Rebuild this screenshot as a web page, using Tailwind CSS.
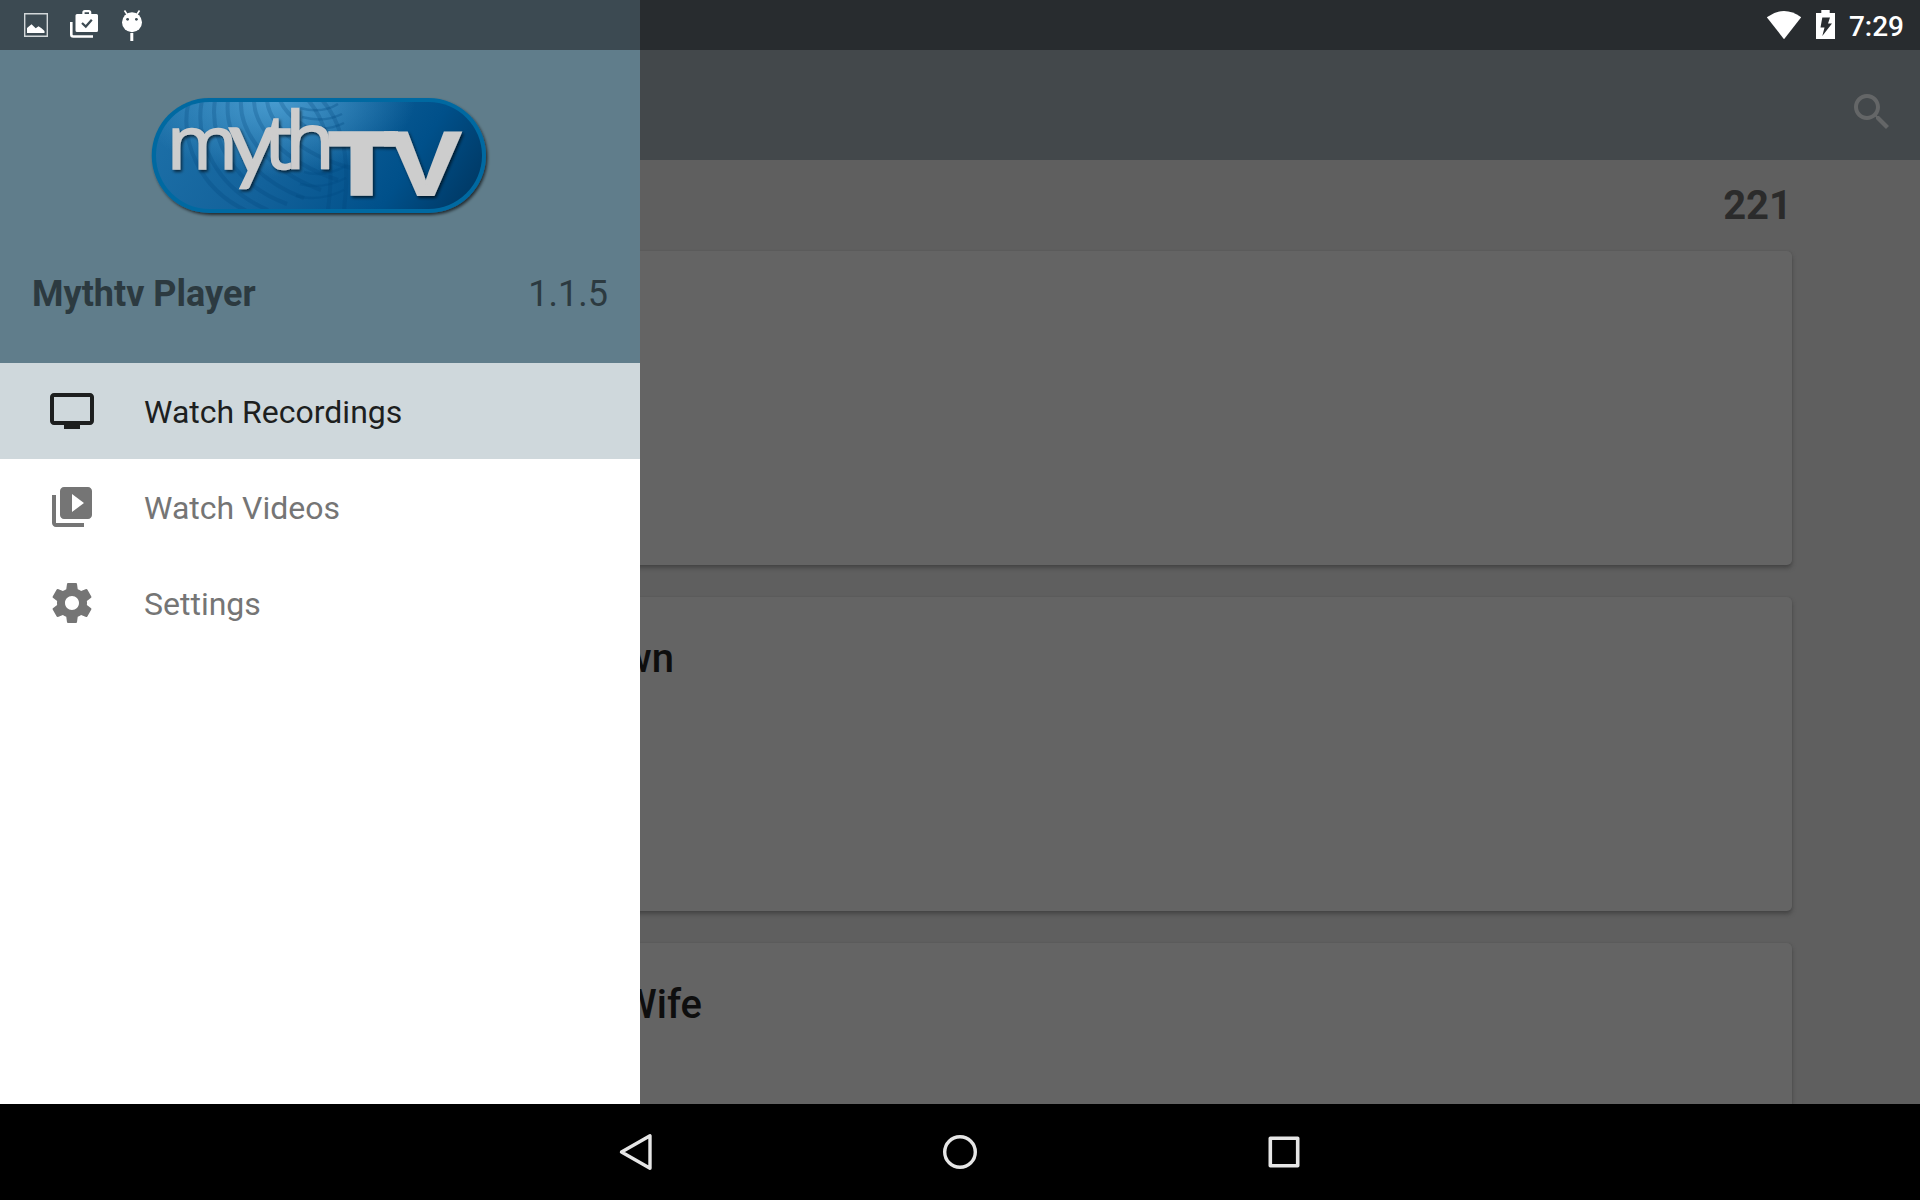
<!DOCTYPE html>
<html lang="en">
<head>
<meta charset="utf-8">
<title>Mythtv Player</title>
<script src="https://cdn.jsdelivr.net/npm/@tailwindcss/browser@4"></script>
</head>
<body class="relative flex h-[1200px] w-[1920px] flex-col overflow-hidden bg-black font-['Roboto',sans-serif]">
  <!-- Recordings screen, dimmed behind the drawer -->
  <header class="h-40 shrink-0 bg-[#43484b] pt-[50px]">
    <div class="flex h-[110px] items-center justify-end pr-6 pt-3.5">
      <svg class="size-12 fill-[#646667]" viewBox="0 0 24 24"><path d="M15.5 14h-.79l-.28-.27C15.41 12.59 16 11.11 16 9.5 16 5.91 13.09 3 9.5 3S3 5.91 3 9.5 5.91 16 9.5 16c1.61 0 3.09-.59 4.23-1.57l.27.28v.79l5 4.99L20.49 19l-4.99-5zm-6 0C7.01 14 5 11.99 5 9.5S7.01 5 9.5 5 14 7.01 14 9.5 11.99 14 9.5 14z"/></svg>
    </div>
  </header>
  <main class="h-[944px] shrink-0 overflow-hidden bg-[#5f5f5f] pr-32">
    <div class="flex h-[91px] items-center justify-end text-[40px] font-bold leading-none text-[#2b2b2b]">221</div>
    <div class="flex flex-col gap-8 pl-32">
      <section class="h-[314px] shrink-0 rounded-[5px] bg-[#646464] shadow-[0_3px_4px_#444,0_0_1px_#555]"></section>
      <section class="h-[314px] shrink-0 rounded-[5px] bg-[#646464] pt-[42px] shadow-[0_3px_4px_#444,0_0_1px_#555]">
        <h2 class="w-[546px] text-right text-[40px] font-medium leading-[40px] text-[#0e0e0e]">wn</h2>
      </section>
      <section class="h-[314px] shrink-0 rounded-[5px] bg-[#646464] pt-[42px] shadow-[0_3px_4px_#444,0_0_1px_#555]">
        <h2 class="w-[574px] text-right text-[40px] font-medium leading-[40px] text-[#0e0e0e]">Wife</h2>
      </section>
    </div>
  </main>

  <!-- System navigation -->
  <nav class="flex h-24 items-center justify-center gap-[276px]">
    <svg class="size-12" viewBox="0 0 48 48" fill="none" stroke="#e6e6e6" stroke-width="3.4" stroke-linejoin="round"><path d="M9.500 24 38 7.800V40.200z"/></svg>
    <svg class="size-12" viewBox="0 0 48 48" fill="none" stroke="#e6e6e6" stroke-width="3.4"><circle cx="24" cy="24" r="15.3"/></svg>
    <svg class="size-12" viewBox="0 0 48 48" fill="none" stroke="#e6e6e6" stroke-width="3.6" stroke-linejoin="round"><path d="M10.3 10.2h27.4v27.6H10.3z"/></svg>
  </nav>

  <!-- Drawer -->
  <aside class="absolute left-0 top-0 flex h-[1104px] w-[640px] flex-col bg-white">
    <div class="flex h-[363px] flex-col bg-[#607d8b] pt-[50px]">
      <svg class="ml-[140px] mt-[35px] h-[145px] w-[360px]" viewBox="140 85 360 145">
        <defs>
          <linearGradient id="sky" gradientUnits="userSpaceOnUse" x1="190" y1="60" x2="460" y2="235">
            <stop offset="0" stop-color="#1d70a8"/><stop offset=".4" stop-color="#13629b"/><stop offset=".75" stop-color="#00508a"/><stop offset="1" stop-color="#003660"/>
          </linearGradient>
          <radialGradient id="glow" gradientUnits="userSpaceOnUse" cx="275" cy="100" r="140" gradientTransform="translate(0 45) scale(1 .55)">
            <stop offset="0" stop-color="#5aaee0" stop-opacity=".75"/><stop offset="1" stop-color="#5aaee0" stop-opacity="0"/>
          </radialGradient>
          <clipPath id="pill"><rect x="156" y="102" width="326" height="107" rx="53.5"/></clipPath>
          <filter id="drop" x="-10%" y="-10%" width="120%" height="130%"><feDropShadow dx="1.5" dy="2" stdDeviation="1.5" flood-color="#000" flood-opacity=".65"/></filter>
        </defs>
        <rect x="151.700" y="98" width="334.300" height="115" rx="57.500" fill="#0069a1" filter="url(#drop)"/>
        <g clip-path="url(#pill)">
          <rect x="150" y="97" width="340" height="118" fill="url(#sky)"/>
          <rect x="150" y="97" width="340" height="118" fill="url(#glow)"/>
          <g fill="none" stroke="#004478" stroke-opacity=".24" stroke-width="4">
            <path d="M189 100c-10 40 10 90 60 112M202 100c-8 40 14 88 66 110M215 100c-6 38 18 84 72 104M228 100c-4 36 22 78 76 98M241 100c-2 32 26 70 80 90M254 100c0 28 30 62 84 80M267 100c2 24 32 54 84 68M280 100c6 16 28 32 60 42"/>
            <path d="M322 100c16 18 30 50 22 110M308 100c16 18 28 50 20 110"/>
          </g>
          <g fill="none" stroke="#004a80" stroke-opacity=".3" stroke-width="2.500">
            <path d="M300 108q22 6 38-4M302 117q22 6 40-3M304 126q22 6 40-3M304 172q20 6 42-6M300 184q22 6 46-6M296 196q24 6 48-6"/>
          </g>
        </g>
        <g fill="#cdcdcd" stroke="#cdcdcd" filter="url(#drop)">
          <text transform="scale(1.030 1)" x="161.800 221.500 256.800 276.700" y="169 173 169 169" font-family="Open Sans" font-size="74.500" stroke-width="1.600">m<tspan font-family="Lato" font-size="90">y</tspan>t<tspan font-size="79">h</tspan></text>
          <text transform="scale(1.190 1)" x="274.300" y="194.600" font-family="Inter" font-size="86" font-weight="900" stroke-width="1.600">T</text>
          <text transform="scale(1.170 1)" x="333.300" y="194.600" font-family="Liberation Sans" font-size="91.500" font-weight="700" stroke-width="2">V</text>
          <path d="M384 131.200h14v15.300h-14z" stroke="none"/>
        </g>
      </svg>
      <div class="mt-[43px] flex items-center justify-between px-8 text-[36px] leading-[42px] text-[#2c3a40]">
        <span class="font-bold">Mythtv Player</span><span>1.1.5</span>
      </div>
    </div>
    <a class="flex h-24 items-center gap-12 bg-[#cfd8dc] pl-12 text-[32px] text-[#1d1f1f]">
      <svg class="size-12 fill-current" viewBox="0 0 24 24"><path d="M21 3H3c-1.110 0-2 .89-2 2v12c0 1.100.89 2 2 2h5v2h8v-2h5c1.100 0 1.990-.9 1.990-2L23 5c0-1.110-.9-2-2-2zm0 14H3V5h18v12z"/></svg>
      <span class="pt-0.5">Watch Recordings</span>
    </a>
    <a class="flex h-24 items-center gap-12 pl-12 text-[32px] text-[#757575]">
      <svg class="size-12 fill-current" viewBox="0 0 24 24"><path d="M4 6H2v14c0 1.100.9 2 2 2h14v-2H4V6zm16-4H8c-1.100 0-2 .9-2 2v12c0 1.100.9 2 2 2h12c1.100 0 2-.9 2-2V4c0-1.100-.9-2-2-2zm-8 12.500v-9l6 4.500-6 4.500z"/></svg>
      <span class="pt-0.5">Watch Videos</span>
    </a>
    <a class="flex h-24 items-center gap-12 pl-12 text-[32px] text-[#757575]">
      <svg class="size-12 fill-current" viewBox="0 0 24 24"><path d="M19.430 12.980c.04-.32.07-.64.07-.98s-.03-.66-.07-.98l2.110-1.650c.19-.15.24-.42.12-.64l-2-3.460c-.12-.22-.39-.3-.61-.22l-2.490 1c-.52-.4-1.080-.73-1.690-.98l-.38-2.650C14.460 2.180 14.250 2 14 2h-4c-.25 0-.46.18-.49.42l-.38 2.650c-.61.25-1.170.59-1.690.98l-2.490-1c-.23-.09-.49 0-.61.22l-2 3.460c-.13.22-.07.49.12.64l2.110 1.650c-.04.32-.07.65-.07.98s.03.66.07.98l-2.110 1.650c-.19.15-.24.42-.12.64l2 3.460c.12.22.39.3.61.22l2.490-1c.52.4 1.080.73 1.690.98l.38 2.650c.03.24.24.42.49.42h4c.25 0 .46-.18.49-.42l.38-2.650c.61-.25 1.170-.59 1.690-.98l2.490 1c.23.09.49 0 .61-.22l2-3.460c.12-.22.07-.49-.12-.64l-2.110-1.650zM12 15.500c-1.930 0-3.500-1.570-3.500-3.500s1.570-3.500 3.500-3.500 3.500 1.570 3.500 3.500-1.570 3.500-3.500 3.500z"/></svg>
      <span class="pt-0.5">Settings</span>
    </a>
  </aside>

  <!-- Status bar -->
  <div class="absolute inset-x-0 top-0 flex h-[50px]">
    <div class="flex w-[640px] bg-[#3c4a52]">
      <svg class="h-[50px] w-[180px]" viewBox="0 0 180 50">
        <path d="M24.700 13.700h22.600v22.600H24.700z" fill="none" stroke="#d2d7d9" stroke-width="1.400"/>
        <path d="M27 33v-5l4.500-3.700 4.200 4 2.800-2 3 2 3 2.700v2z" fill="#fff"/>
        <path d="M71.300 22v12.500q0 2 2 2H93" fill="none" stroke="#fff" stroke-width="2.600"/>
        <path fill="#fff" fill-rule="evenodd" d="M77 14h5.300v-1.500q0-2.500 2.500-2.500h4q2.500 0 2.500 2.500V14H96.500q1.500 0 1.500 1.500v15q0 1.500-1.500 1.500H77q-1.500 0-1.500-1.500v-15q0-1.500 1.500-1.500zm7.600 0h4.400v-1.700h-4.400z"/>
        <path d="m82 23 3.800 3.600 6-6.800" fill="none" stroke="#3c4a52" stroke-width="2.200"/>
        <path d="m124.500 10.500 3 4.500M139.500 10.500l-3 4.500" stroke="#fff" stroke-width="1.600"/>
        <circle cx="132" cy="22.200" r="10" fill="#fff"/>
        <circle cx="127.600" cy="19.300" r="1.400" fill="#3c4a52"/><circle cx="136.400" cy="19.300" r="1.400" fill="#3c4a52"/>
        <path d="M130.300 33h3v8h-3z" fill="#fff"/>
      </svg>
    </div>
    <div class="flex flex-1 justify-end bg-[#282c2f] pr-4">
      <svg class="mr-2 h-[50px] w-[80px]" viewBox="1761 0 80 50">
        <path d="M1784 39.200 1766.800 17.300q17.200-12.600 34.400 0z" fill="#fff"/>
        <path d="M1816 13h5.300v-3h8.400v3h5.300v26h-19z" fill="#fff"/>
        <path d="M1822.300 17.500h7.700l-2 6h4l-9.700 12.500 2.200-8.500h-4z" fill="#282c2f"/>
      </svg>
      <span class="pt-0.5 text-[28px] font-medium leading-[50px] text-white">7:29</span>
    </div>
  </div>
</body>
</html>
